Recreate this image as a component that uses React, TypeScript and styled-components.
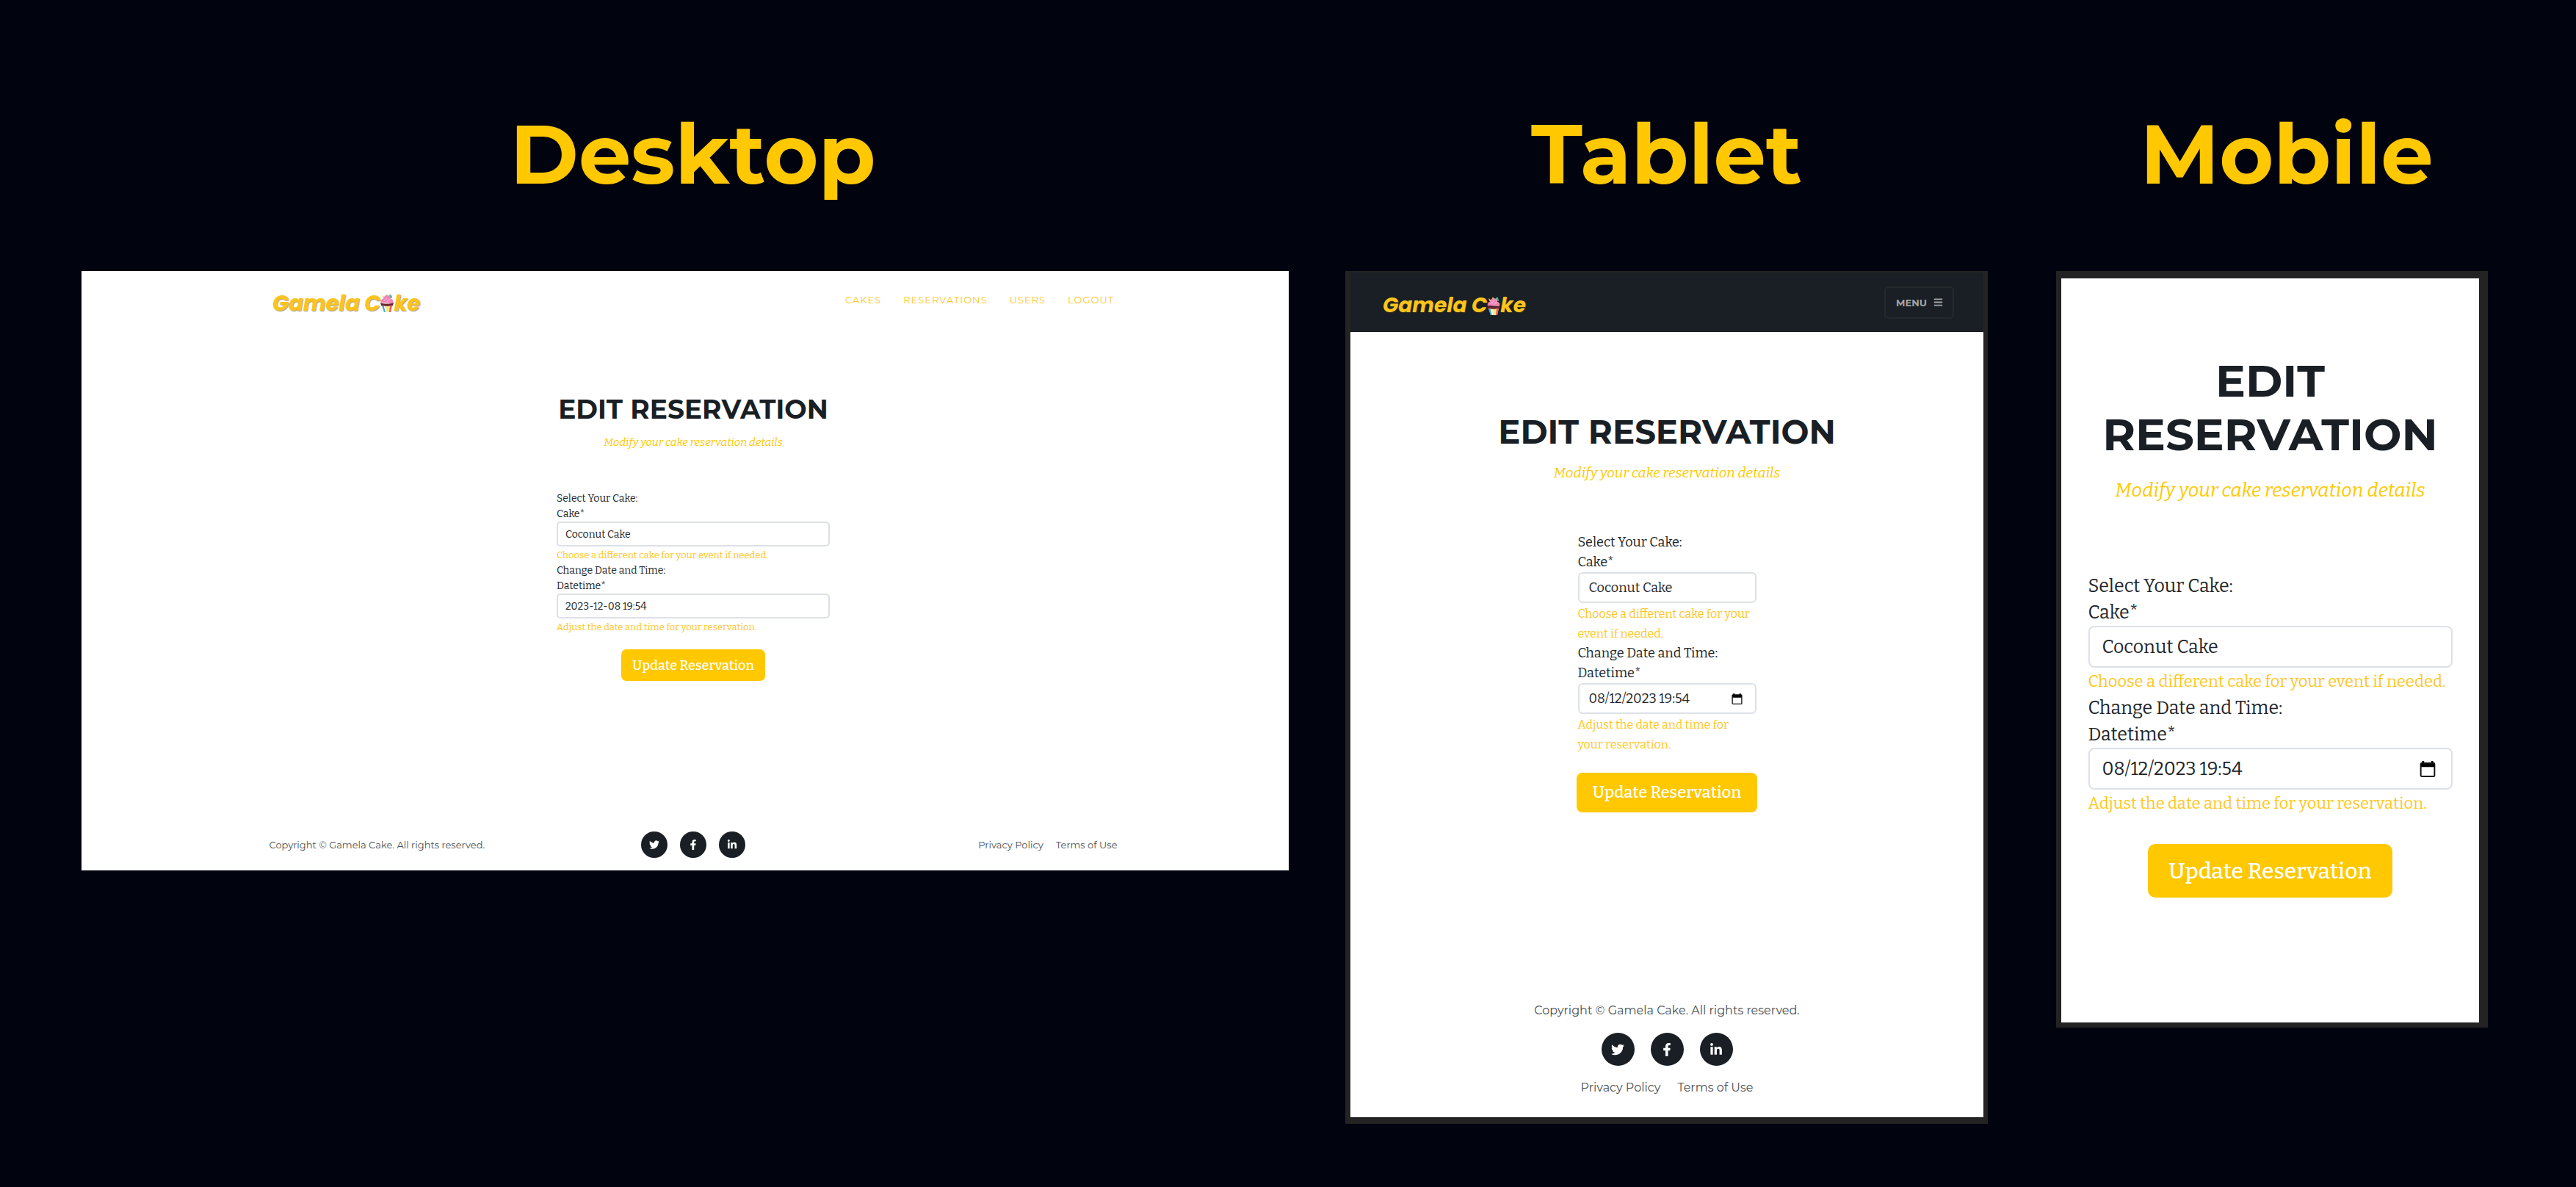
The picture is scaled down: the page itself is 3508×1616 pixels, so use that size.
import React from 'react';
import styled, { createGlobalStyle, ThemeProvider } from 'styled-components';
import { FaBars, FaFacebookF, FaLinkedinIn, FaTwitter } from 'react-icons/fa';

const yellow = '#ffc800';
const ink = '#191f24';
const sans = 'Montserrat, Inter, sans-serif';
const slab = '"Roboto Slab", Bitter, "DejaVu Serif Condensed", serif';

const desktop = {
  title: 36, titleLine: 44, lead: 15, text: 14, line: 21, hint: 13, field: 34, fieldPad: 12,
  radius: 5, button: 18, buttonHeight: 43, buttonPad: 15, buttonGap: 20, form: 372,
  mainTop: 88, leadTop: 13, formTop: 55, footer: 13, circle: 36, circleGap: 17, icon: 14, linkGap: 17, logo: 29,
};
const tablet = {
  title: 45, titleLine: 54, lead: 19, text: 18, line: 27, hint: 16, field: 42, fieldPad: 15,
  radius: 6, button: 22, buttonHeight: 54, buttonPad: 22, buttonGap: 25, form: 243,
  mainTop: 109, leadTop: 15, formTop: 68, footer: 16, circle: 45, circleGap: 22, icon: 18, linkGap: 23, logo: 28,
};
const mobile = {
  title: 61, titleLine: 73, lead: 26, text: 25, line: 36, hint: 22, field: 57, fieldPad: 19,
  radius: 8, button: 30, buttonHeight: 73, buttonPad: 28, buttonGap: 37, form: 496,
  mainTop: 103, leadTop: 22, formTop: 94, footer: 20, circle: 60, circleGap: 30, icon: 24, linkGap: 30, logo: 36,
};
type Scale = typeof desktop;
declare module 'styled-components' {
  export interface DefaultTheme extends Scale {}
}

const GlobalStyle = createGlobalStyle`
  *, *::before, *::after { box-sizing: border-box; }
  body { margin: 0; background: #01030f; }
`;

const Page = styled.main`
  display: grid;
  grid-template-columns: 1665fr 912fr 628fr;
  align-items: start;
  gap: 56px;
  min-height: 100vh;
  padding: 135px 80px 80px 111px;
`;

const Stage = styled.section<{ $inset?: number }>`
  min-width: 0;
  padding-right: ${(p) => p.$inset ?? 0}px;
`;

const StageTitle = styled.h2`
  margin: 0 0 84px;
  color: ${yellow};
  font: 700 113px/150px ${sans};
  text-align: center;
`;

const Screen = styled.div<{ $frame?: string; $height: number; $right?: number; $left?: number }>`
  display: flex;
  flex-direction: column;
  min-height: ${(p) => p.$height}px;
  margin-right: ${(p) => p.$right ?? 0}px;
  padding-left: ${(p) => p.$left ?? 0}px;
  border: 0 solid #232323;
  border-width: ${(p) => p.$frame ?? '0'};
  background: #fff;
  color: #212529;
`;

const DesktopHeader = styled.header`
  display: flex;
  align-items: center;
  justify-content: space-between;
  width: 1146px;
  max-width: 100%;
  height: 78px;
  margin: 0 auto;
`;

const TabletHeader = styled.header`
  display: flex;
  align-items: center;
  justify-content: space-between;
  height: 81px;
  padding: 0 40px 0 44px;
  background: ${ink};
`;

const Logo = styled.a`
  display: flex;
  align-items: center;
  padding-top: 9px;
  color: #fcc41c;
  font: italic 700 ${(p) => p.theme.logo}px/36px Poppins, Montserrat, Inter, sans-serif;
  text-decoration: none;
  text-shadow: 1px 1px 1px rgba(90, 70, 20, 0.55);

  svg { width: 18px; height: 25px; }
`;

const Nav = styled.nav`
  display: flex;
  gap: 30px;

  a {
    color: #ffc61e;
    font: 400 13px/20px ${sans};
    letter-spacing: 1px;
    text-decoration: none;
  }
`;

const MenuButton = styled.button`
  display: flex;
  align-items: center;
  gap: 9px;
  height: 44px;
  padding: 0 13px 0 14px;
  border: 2px solid #24292d;
  border-radius: 6px;
  background: transparent;
  color: #a3a5a7;
  font: 700 13px/20px ${sans};
`;

const Content = styled.div`
  display: flex;
  flex: 1;
  flex-direction: column;
  align-items: center;
  padding: ${(p) => p.theme.mainTop}px 36px 60px;
`;

const Title = styled.h1`
  margin: 0;
  color: ${ink};
  font: 700 ${(p) => p.theme.title}px/${(p) => p.theme.titleLine}px ${sans};
  text-align: center;
  text-transform: uppercase;
`;

const Lead = styled.p`
  margin: ${(p) => p.theme.leadTop}px 0 0;
  color: ${yellow};
  font: italic 400 ${(p) => p.theme.lead}px/${(p) => p.theme.line}px ${slab};
`;

const Form = styled.form`
  display: flex;
  flex-direction: column;
  width: ${(p) => p.theme.form}px;
  max-width: 100%;
  margin-top: ${(p) => p.theme.formTop}px;
  font: 400 ${(p) => p.theme.text}px/${(p) => p.theme.line}px ${slab};
`;

const Prompt = styled.span`
  display: block;
`;

const Control = styled.div`
  display: flex;
  align-items: center;
  height: ${(p) => p.theme.field}px;
  border: 2px solid #dce1e6;
  border-radius: ${(p) => p.theme.radius}px;
  background: #fff;

  input, select {
    flex: 1;
    min-width: 0;
    height: 100%;
    padding: 0 0 0 ${(p) => p.theme.fieldPad - 2}px;
    border: 0;
    outline: 0;
    background: transparent;
    color: #212529;
    font: inherit;
    appearance: none;
  }
`;

const PickerButton = styled.button`
  display: flex;
  padding: 0 ${(p) => p.theme.fieldPad + 2}px 0 0;
  border: 0;
  background: transparent;

  svg { width: ${(p) => p.theme.text - 3}px; height: ${(p) => p.theme.text - 3}px; }
`;

const Hint = styled.small`
  margin-top: 1px;
  color: #ffc61e;
  font-size: ${(p) => p.theme.hint}px;
`;

const Submit = styled.button`
  align-self: center;
  flex-shrink: 0;
  height: ${(p) => p.theme.buttonHeight}px;
  margin: ${(p) => p.theme.buttonGap}px -10px 0;
  padding: 0 ${(p) => p.theme.buttonPad}px;
  border: 0;
  border-radius: ${(p) => p.theme.radius + 2}px;
  background: ${yellow};
  color: #fff;
  font: 500 ${(p) => p.theme.button}px/1 ${slab};
  white-space: nowrap;
`;

const Footer = styled.footer<{ $stacked?: boolean }>`
  display: ${(p) => (p.$stacked ? 'flex' : 'grid')};
  flex-direction: column;
  grid-template-columns: 1fr auto 1fr;
  align-items: center;
  gap: 18px;
  width: 1155px;
  max-width: 100%;
  margin: 0 auto;
  padding-bottom: ${(p) => (p.$stacked ? 28 : 17)}px;
  color: #4a4f54;
  font: 400 ${(p) => p.theme.footer}px/24px ${sans};
`;

const Socials = styled.div`
  display: flex;
  gap: ${(p) => p.theme.circleGap}px;

  a {
    display: grid;
    place-items: center;
    width: ${(p) => p.theme.circle}px;
    height: ${(p) => p.theme.circle}px;
    border-radius: 50%;
    background: ${ink};
    color: #fff;
    font-size: ${(p) => p.theme.icon}px;
  }
`;

const Links = styled.div`
  display: flex;
  justify-content: flex-end;
  gap: ${(p) => p.theme.linkGap}px;

  a { color: inherit; text-decoration: none; }
`;

const Cupcake = () => (
  <svg viewBox="0 0 18 25" aria-hidden="true">
    <path d="M2 2l4 3 2-5 2 4 5-3-1 6H4z" fill="#f5e04d" />
    <path d="M12 1c3 0 4 2 4 5l-3-1z" fill="#3fb9a5" />
    <path d="M1 12c-1-3 1-5 3-5 0-3 3-5 5-5 3 0 5 2 5 5 3 0 4 3 3 6z" fill="#f283b7" />
    <path d="M5 10c1-3 4-2 4-5M9 11c1-3 4-2 4-4" fill="none" stroke="#f9b4d4" strokeWidth="1.2" />
    <path d="M0 12c5 2 13 2 18 0l-1 4c-5 2-11 2-16 0z" fill="#6b2430" />
    <path d="M2 16c4 1 10 1 14 0l-2 9H5z" fill="#fbe58a" />
    <path d="M2 16l3 1 2 8H5z" fill="#3aa7e0" />
    <path d="M5 17h2l1 8H7z" fill="#fff" />
    <path d="M13 17l3-1-2 9h-2z" fill="#ee5a4f" />
  </svg>
);

const CalendarIcon = () => (
  <svg viewBox="0 0 15 16" aria-hidden="true">
    <path d="M2 0h2v2H2zM11 0h2v2h-2z" fill="#000" />
    <path d="M1.500 1.500h12q1 0 1 1V6H.5V2.500q0-1 1-1z" fill="#000" />
    <rect x="0.700" y="2.200" width="13.600" height="13.100" rx="1" fill="none" stroke="#111" strokeWidth="1.400" />
  </svg>
);

const Brand = () => (
  <Logo href="#home">
    <span>Gamela C</span>
    <Cupcake />
    <span>ke</span>
  </Logo>
);

function Reservation({ id, date, picker }: { id: string; date: string; picker?: boolean }) {
  return (
    <Content>
      <Title>Edit Reservation</Title>
      <Lead>Modify your cake reservation details</Lead>
      <Form onSubmit={(e) => e.preventDefault()}>
        <Prompt>Select Your Cake:</Prompt>
        <label htmlFor={`${id}-cake`}>Cake*</label>
        <Control>
          <select id={`${id}-cake`} defaultValue="Coconut Cake">
            <option>Coconut Cake</option>
          </select>
        </Control>
        <Hint>Choose a different cake for your event if needed.</Hint>
        <Prompt>Change Date and Time:</Prompt>
        <label htmlFor={`${id}-date`}>Datetime*</label>
        <Control>
          <input id={`${id}-date`} type="text" defaultValue={date} />
          {picker && (
            <PickerButton type="button" aria-label="Open calendar">
              <CalendarIcon />
            </PickerButton>
          )}
        </Control>
        <Hint>Adjust the date and time for your reservation.</Hint>
        <Submit type="submit">Update Reservation</Submit>
      </Form>
    </Content>
  );
}

function SiteFooter({ stacked }: { stacked?: boolean }) {
  return (
    <Footer $stacked={stacked}>
      <span>Copyright © Gamela Cake. All rights reserved.</span>
      <Socials>
        <a href="#twitter" aria-label="Twitter"><FaTwitter /></a>
        <a href="#facebook" aria-label="Facebook"><FaFacebookF /></a>
        <a href="#linkedin" aria-label="LinkedIn"><FaLinkedinIn /></a>
      </Socials>
      <Links>
        <a href="#privacy">Privacy Policy</a>
        <a href="#terms">Terms of Use</a>
      </Links>
    </Footer>
  );
}

export default function App() {
  return (
    <>
      <GlobalStyle />
      <Page>
        <ThemeProvider theme={desktop}>
          <Stage>
            <StageTitle>Desktop</StageTitle>
            <Screen $height={816} $right={21} $left={22}>
              <DesktopHeader>
                <Brand />
                <Nav>
                  <a href="#cakes">CAKES</a>
                  <a href="#reservations">RESERVATIONS</a>
                  <a href="#users">USERS</a>
                  <a href="#logout">LOGOUT</a>
                </Nav>
              </DesktopHeader>
              <Reservation id="desktop" date="2023-12-08 19:54" />
              <SiteFooter />
            </Screen>
          </Stage>
        </ThemeProvider>
        <ThemeProvider theme={tablet}>
          <Stage $inset={37}>
            <StageTitle>Tablet</StageTitle>
            <Screen $height={1161} $frame="2px 6px 9px 7px">
              <TabletHeader>
                <Brand />
                <MenuButton type="button">
                  MENU <FaBars />
                </MenuButton>
              </TabletHeader>
              <Reservation id="tablet" date="08/12/2023 19:54" picker />
              <SiteFooter stacked />
            </Screen>
          </Stage>
        </ThemeProvider>
        <ThemeProvider theme={mobile}>
          <Stage>
            <StageTitle>Mobile</StageTitle>
            <Screen $height={1030} $right={40} $frame="10px 12px 7px 7px">
              <Reservation id="mobile" date="08/12/2023 19:54" picker />
            </Screen>
          </Stage>
        </ThemeProvider>
      </Page>
    </>
  );
}
